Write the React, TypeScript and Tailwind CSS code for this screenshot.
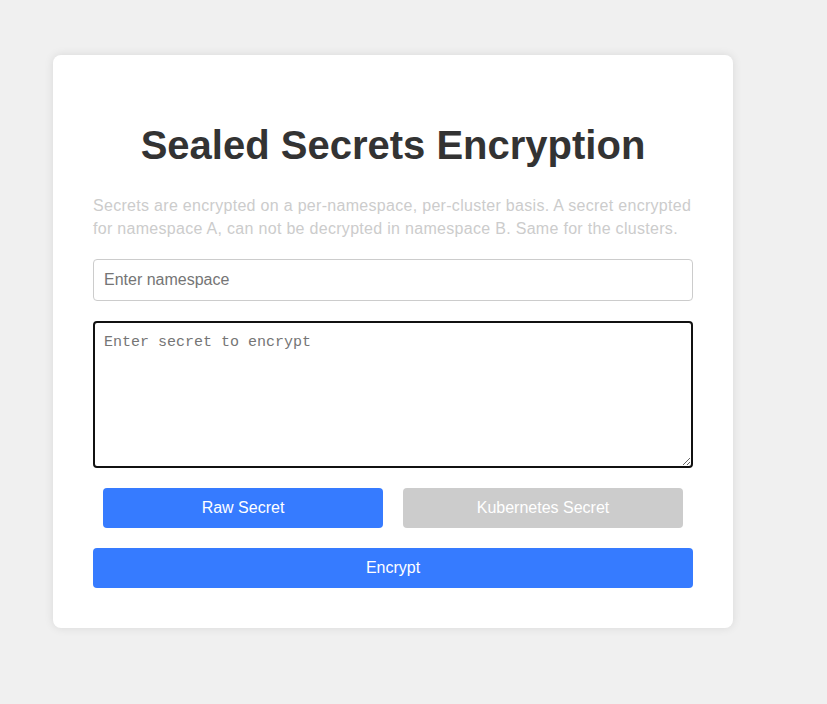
import React, { useState } from "react";

const App = () => {
  const [mode, setMode] = useState<"raw" | "k8s">("raw");

  return (
    <div
      className="min-h-screen bg-[#f0f0f0] pl-[53px] pt-[55px]"
      style={{ fontFamily: '"Liberation Sans", Arial, sans-serif' }}
    >
      <div className="w-[680px] rounded-lg bg-white p-10 shadow-[0_0_10px_rgba(0,0,0,0.1)]">
        <h1 className="mt-[27px] mb-[26px] text-center text-[40px] leading-[46px] font-bold text-[#333]">
          Sealed Secrets Encryption
        </h1>
        <p className="mb-[19px] text-base leading-[23px] tracking-[0.3px] text-[#ccc]">
          Secrets are encrypted on a per-namespace, per-cluster basis. A secret
          encrypted for namespace A, can not be decrypted in namespace B. Same
          for the clusters.
        </p>

        {/* namespace */}
        <input
          type="text"
          placeholder="Enter namespace"
          className="block h-[42px] w-full rounded border border-[#ccc] px-[10px] text-base text-[#333] placeholder:text-[#757575] focus:outline-none"
        />

        {/* secret body */}
        <textarea
          placeholder="Enter secret to encrypt"
          className="mt-5 block h-[147px] w-full rounded border-2 border-[#111] px-[9px] pt-[10px] pb-[9px] text-[15px] leading-[19px] text-[#333] placeholder:text-[#757575] focus:outline-none"
          style={{ fontFamily: '"Liberation Mono", "DejaVu Sans Mono", monospace' }}
        />

        <div className="mt-5 flex">
          <button
            onClick={() => setMode("raw")}
            className={`mx-[10px] h-10 flex-1 rounded text-base text-white ${
              mode === "raw" ? "bg-[#367bff]" : "bg-[#ccc]"
            }`}
          >
            Raw Secret
          </button>
          <button
            onClick={() => setMode("k8s")}
            className={`mx-[10px] h-10 flex-1 rounded text-base text-white ${
              mode === "k8s" ? "bg-[#367bff]" : "bg-[#ccc]"
            }`}
          >
            Kubernetes Secret
          </button>
        </div>

        <button className="mt-5 block h-10 w-full rounded bg-[#367bff] text-base text-white">
          Encrypt
        </button>
      </div>
    </div>
  );
};

export default App;
